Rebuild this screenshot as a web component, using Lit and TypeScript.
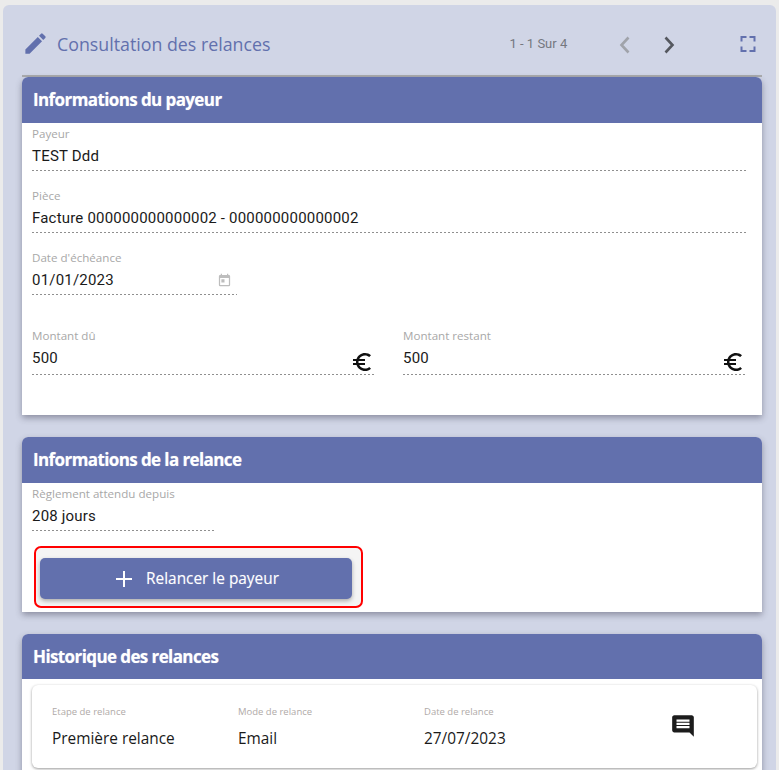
import { LitElement, html, css } from "lit";
import { customElement } from "lit/decorators.js";

const euro = html`<svg class="euro" viewBox="0 0 24 24"><path d="M15 18.5c-2.51 0-4.68-1.42-5.76-3.5H15v-2H8.58c-.05-.33-.08-.66-.08-1s.03-.67.08-1H15V9H9.24C10.32 6.92 12.5 5.5 15 5.5c1.61 0 3.09.59 4.23 1.57L21 5.3C19.41 3.87 17.3 3 15 3c-3.92 0-7.24 2.51-8.48 6H3v2h3.06c-.04.33-.06.66-.06 1s.02.67.06 1H3v2h3.52c1.24 3.49 4.56 6 8.48 6 2.31 0 4.41-.87 6-2.3l-1.78-1.77c-1.13.98-2.6 1.57-4.22 1.57z"/></svg>`;

@customElement("app-root")
export class AppRoot extends LitElement {
  static styles = css`
    :host { display: block; width: 779px; height: 770px; overflow: hidden; background: #ebebeb; font-family: "Open Sans", sans-serif; }
    .panel { margin: 5px 3px 0 3px; height: 800px; box-sizing: border-box; background: #d0d5e6; border-radius: 6px 6px 0 0; padding: 0 14px 0 19px; }
    .top { display: flex; align-items: center; border-bottom: 2px solid #a9aaad; box-sizing: border-box; height: 72px; padding-top: 7px; }
    .pencil { width: 27px; height: 27px; fill: #6270ad; flex: none; }
    .title { font-size: 17.8px; color: #6270ad; margin-left: 8px; line-height: 24px; flex: 1; }
    .count { font: 13px Roboto, sans-serif; color: #75787f; width: 103.5px; }
    .nav { width: 24px; height: 30px; fill: none; stroke-width: 2.6; flex: none; margin-top: 3px; }
    .prev { stroke: #a0a3aa; margin-right: 20px; }
    .next { stroke: #55585f; margin-right: 55px; }
    .full { width: 24px; height: 24px; fill: #6270ad; flex: none; margin-right: 2px; }
    .card { background: #fff; border-radius: 6px 6px 0 0; box-shadow: 0 3px 6px rgba(60,60,80,.45); margin-bottom: 22px; width: 740px; }
    .card.c1 { height: 338px; }
    .card.c2 { height: 175px; }
    .card.c3 { height: 200px; }
    .head { height: 46px; box-sizing: border-box; background: #6270ad; color: #fff; font-size: 17px; font-weight: 700; line-height: 45px; padding-left: 11px; border-radius: 6px 6px 0 0; letter-spacing: -.6px; text-shadow: 0 0 1px rgba(255,255,255,.5); }
    .c3 .head { height: 45px; }
    .body { padding: 0 16px 0 10px; display: grid; }
    .field { display: flex; flex-direction: column; height: 48px; box-sizing: border-box; position: relative; margin-bottom: 14px; background: repeating-linear-gradient(90deg, #8f8f8f 0 2px, transparent 2px 4px) bottom / 100% 1px no-repeat; }
    .label { font-size: 11.6px; line-height: 16px; height: 16px; margin-top: 3px; color: #a8a8a8; }
    .value { font: 15px Roboto, sans-serif; color: #1a1a1a; line-height: 22px; margin-top: 3px; letter-spacing: .2px; }
    .short { width: 205px; }
    .cal { position: absolute; right: 5px; top: 26px; width: 15px; height: 15px; fill: #bdbdbd; }
    .money { display: grid; grid-template-columns: 343px 343px; gap: 28px; margin-top: 18px; }
    .euro { position: absolute; right: 1px; top: 23px; width: 24px; height: 24px; fill: #111; }
    .money .label { margin-top: 1px; }
    .f208 { width: 182px; margin-bottom: 0; }
    .ring { margin: 15px 0 0 2px; width: 329px; height: 62px; box-sizing: border-box; border: 2px solid #f00; border-radius: 7px; padding: 10px 9px 0 4px; background: #f4f4f4; }
    .btn { height: 41px; background: #6270ad; border-radius: 5px; box-shadow: 0 2px 4px rgba(0,0,0,.3); display: flex; align-items: center; justify-content: center; color: #fff; font-size: 15.4px; font-weight: 500; gap: 10px; text-shadow: 0 0 1px rgba(255,255,255,.35); }
    .btn svg { width: 24px; height: 24px; fill: #fff; margin-left: -1px; }
    .btn span { margin-bottom: 1px; }
    .inner { margin: 6px 5px 0 10px; height: 83px; border-radius: 6px; box-shadow: 0 1px 3px rgba(0,0,0,.4); display: grid; grid-template-columns: 186px 186px 1fr; padding: 20px 0 0 20px; position: relative; box-sizing: border-box; }
    .h-label { font-size: 9.5px; line-height: 14px; color: #b0aaa8; }
    .h-value { font-size: 15.4px; line-height: 22px; color: #1a1a1a; margin-top: 9px; }
    .msg { position: absolute; left: 638px; top: 28px; width: 26px; height: 26px; fill: #1c1c1c; }
  `;

  render() {
    return html`<div class="panel">
      <div class="top">
        <svg class="pencil" viewBox="0 0 24 24"><path d="M3 17.25V21h3.75L17.81 9.94l-3.75-3.75L3 17.25zM20.71 7.04a1 1 0 0 0 0-1.41l-2.34-2.34a1 1 0 0 0-1.41 0l-1.83 1.83 3.75 3.75 1.83-1.83z"/></svg>
        <span class="title">Consultation des relances</span>
        <span class="count">1 - 1 Sur 4</span>
        <svg class="nav prev" viewBox="0 0 24 30"><path d="M15.5 7.5l-7 7.5 7 7.5"/></svg>
        <svg class="nav next" viewBox="0 0 24 30"><path d="M8.5 7.5l7 7.5-7 7.5"/></svg>
        <svg class="full" viewBox="0 0 24 24"><path d="M4.5 4h6v2h-4v3.500h-2zM13.500 4h6v5.500h-2V6h-4zM4.500 14.500h2V18h4v2h-6zM17.500 14.500h2V20h-6v-2h4z"/></svg>
      </div>
      <section class="card c1">
        <div class="head">Informations du payeur</div>
        <div class="body">
          <div class="field"><span class="label">Payeur</span><span class="value">TEST Ddd</span></div>
          <div class="field"><span class="label">Pièce</span><span class="value">Facture 000000000000002 - 000000000000002</span></div>
          <div class="field short"><span class="label">Date d'échéance</span><span class="value">01/01/2023</span>
            <svg class="cal" viewBox="0 0 24 24"><path d="M19 3h-1V1h-2v2H8V1H6v2H5a2 2 0 0 0-2 2v14a2 2 0 0 0 2 2h14a2 2 0 0 0 2-2V5a2 2 0 0 0-2-2zm0 16H5V8h14zM7 10h5v5H7z"/></svg>
          </div>
          <div class="money">
            <div class="field"><span class="label">Montant dû</span><span class="value">500</span>${euro}</div>
            <div class="field"><span class="label">Montant restant</span><span class="value">500</span>${euro}</div>
          </div>
        </div>
      </section>
      <section class="card c2">
        <div class="head">Informations de la relance</div>
        <div class="body">
          <div class="field f208"><span class="label">Règlement attendu depuis</span><span class="value">208 jours</span></div>
          <div class="ring"><div class="btn">
            <svg viewBox="0 0 24 24"><path d="M11 4h2v7h7v2h-7v7h-2v-7H4v-2h7z"/></svg>
            <span>Relancer le payeur</span>
          </div></div>
        </div>
      </section>
      <section class="card c3">
        <div class="head">Historique des relances</div>
        <div class="inner">
          <div><div class="h-label">Etape de relance</div><div class="h-value">Première relance</div></div>
          <div><div class="h-label">Mode de relance</div><div class="h-value">Email</div></div>
          <div><div class="h-label">Date de relance</div><div class="h-value">27/07/2023</div></div>
          <svg class="msg" viewBox="0 0 24 24"><path d="M21.99 4c0-1.100-.89-2-1.990-2H4c-1.100 0-2 .9-2 2v12c0 1.100.9 2 2 2h14l4 4zM18 14H6v-2h12zm0-3H6V9h12zm0-3H6V6h12z"/></svg>
        </div>
      </section>
    </div>`;
  }
}
